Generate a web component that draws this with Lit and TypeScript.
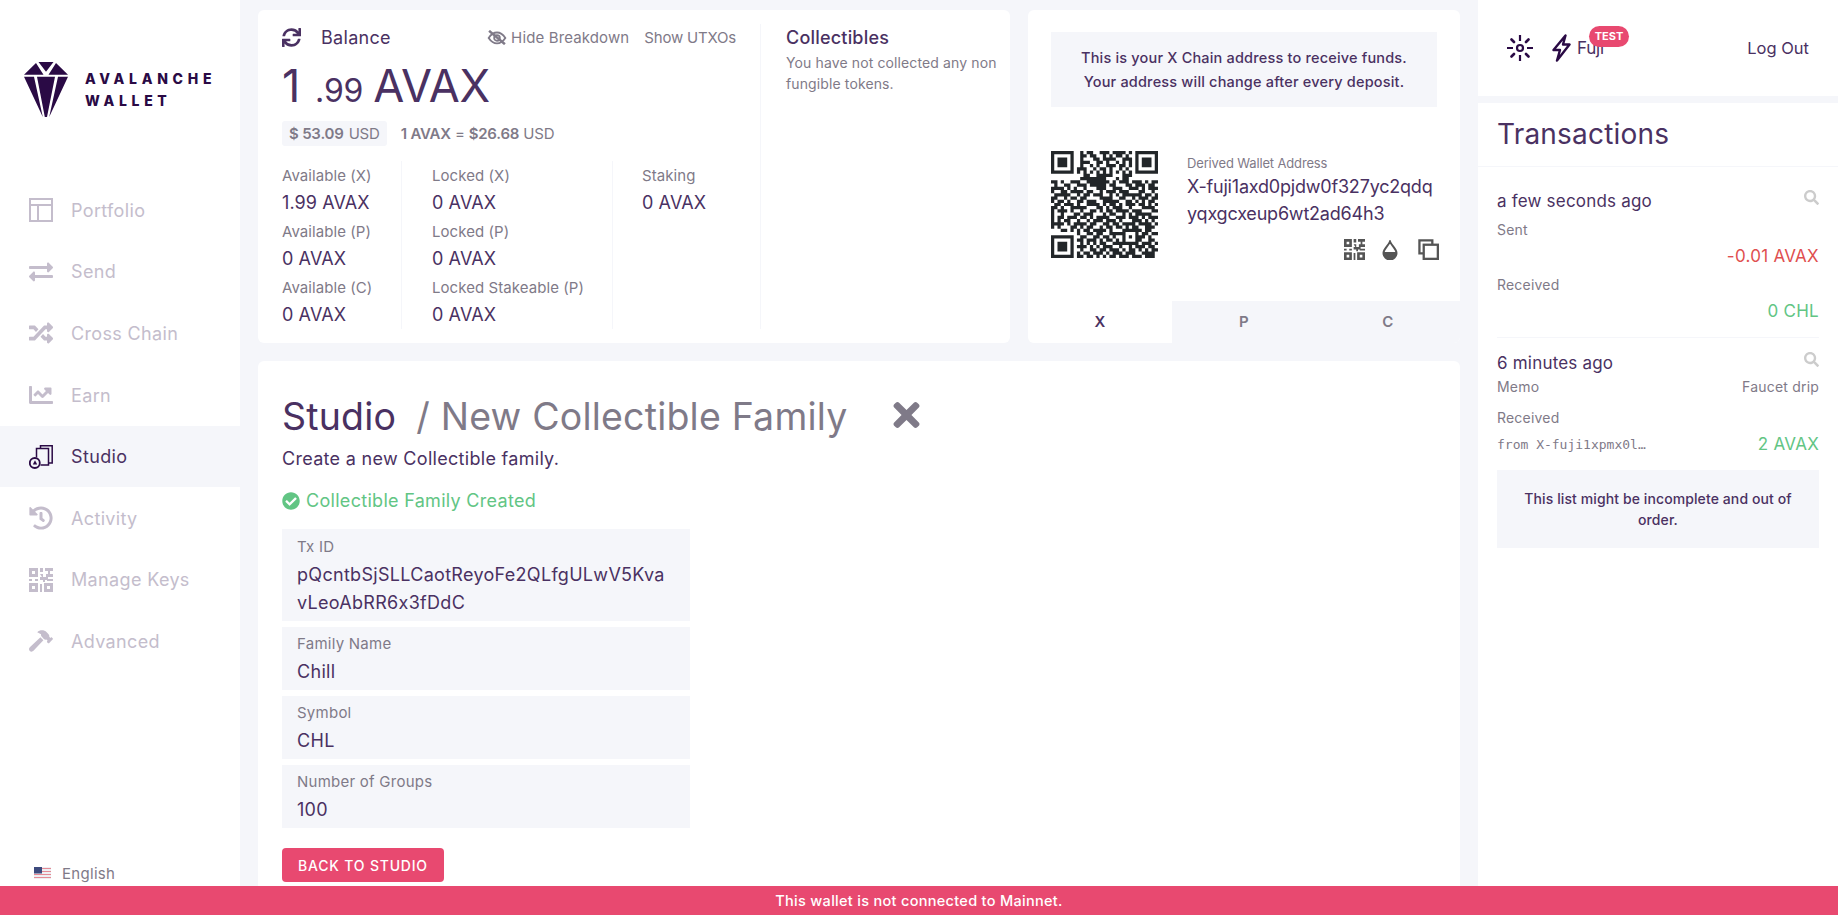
import { LitElement, css, html, svg } from "lit";
import { customElement } from "lit/decorators.js";

// QR modules, read off the screenshot by eye. Finder squares are added in code.
const QR_ROWS = [
  "000000000101100111011110100000000",
  "000000000110110010101101000000000",
  "000000000100011011110011100000000",
  "000000000111001101001010100000000",
  "000000000100101001110110100000000",
  "000000001110010110100101000000000",
  "000000001010101010101010100000000",
  "000000000011001111100011100000000",
  "000000000111111110001011000000000",
  "110100111001111111010111011101011",
  "010011001110111110110001101110110",
  "111101010010001110011100111010111",
  "100110111101100101110111000110010",
  "011111001011011100101011111101101",
  "110010110110000111100110010111011",
  "101101001101110011111001101010110",
  "011011101001111010110101110110101",
  "110100111110001101011100100011110",
  "101110100100110101101111011100011",
  "100100011011100010110010101111100",
  "101101110110101111001110111010111",
  "101011001001011101110100011101010",
  "111101011110110011011011110111101",
  "101000110101100101101101011001110",
  "000110101011011110100011111101100",
  "000000001001101100111110001011011",
  "000000000110011011010010101110100",
  "000000001101110101101010001100110",
  "000000000101010110011111111011101",
  "000000001110101011100100101110110",
  "000000000100110110111010110101011",
  "000000001011011101011101110011110",
  "000000001101101010110111011101110",
];

const QR_FINDERS = [
  [0, 0],
  [26, 0],
  [0, 26],
];

function qrPath(): string {
  let d = "";
  const mod = (x: number, y: number) => {
    d += `M${x} ${y}h1v1h-1z`;
  };
  QR_ROWS.forEach((row, y) => {
    [...row.padEnd(33, "0")].forEach((c, x) => {
      if (c === "1") mod(x, y);
    });
  });
  for (const [fx, fy] of QR_FINDERS) {
    d += `M${fx} ${fy}h7v7h-7zM${fx + 1} ${fy + 1}v5h5v-5zM${fx + 2} ${fy + 2}h3v3h-3z`;
  }
  return d;
}

const ICONS = {
  portfolio: svg`<svg viewBox="0 0 24 24" fill="none" stroke="currentColor" stroke-width="2"><rect x="1" y="1" width="22" height="22"/><path d="M1 7h22M9 7v16"/></svg>`,
  send: svg`<svg viewBox="0 0 512 512" fill="currentColor"><path d="M0 168v-16c0-13.255 10.745-24 24-24h360V80c0-21.367 25.899-32.042 40.971-16.971l80 80c9.372 9.373 9.372 24.569 0 33.941l-80 80C409.956 271.982 384 261.456 384 240v-48H24c-13.255 0-24-10.745-24-24zm488 152H128v-48c0-21.314-25.862-32.08-40.971-16.971l-80 80c-9.372 9.373-9.372 24.569 0 33.941l80 80C102.057 463.997 128 453.437 128 432v-48h360c13.255 0 24-10.745 24-24v-16c0-13.255-10.745-24-24-24z"/></svg>`,
  cross: svg`<svg viewBox="0 0 512 512" fill="currentColor"><path d="M504.971 359.029c9.373 9.373 9.373 24.569 0 33.941l-80 79.984c-15.01 15.01-40.971 4.49-40.971-16.971V416h-58.785a12.004 12.004 0 0 1-8.773-3.812l-70.556-75.596 53.333-57.143L352 336h32v-39.981c0-21.438 25.943-31.998 40.971-16.971l80 79.981zM12 176h84l52.781 56.551 53.333-57.143-70.556-75.596A11.999 11.999 0 0 0 122.785 96H12c-6.627 0-12 5.373-12 12v56c0 6.627 5.373 12 12 12zm372 0v39.984c0 21.46 25.961 31.98 40.971 16.971l80-79.984c9.373-9.373 9.373-24.569 0-33.941l-80-79.981C409.943 24.021 384 34.582 384 56.019V96h-58.785a12.004 12.004 0 0 0-8.773 3.812L96 336H12c-6.627 0-12 5.373-12 12v56c0 6.627 5.373 12 12 12h110.785c3.326 0 6.503-1.381 8.773-3.812L352 176h32z"/></svg>`,
  earn: svg`<svg viewBox="0 0 512 512" fill="currentColor"><path d="M496 384H64V80c0-8.84-7.16-16-16-16H16C7.16 64 0 71.16 0 80v336c0 17.67 14.33 32 32 32h464c8.84 0 16-7.16 16-16v-32c0-8.84-7.16-16-16-16zM464 96H345.94c-21.38 0-32.09 25.85-16.97 40.97l32.4 32.4L288 242.75l-73.37-73.37c-12.5-12.5-32.76-12.5-45.25 0l-68.69 68.69c-6.25 6.25-6.25 16.38 0 22.63l22.62 22.62c6.25 6.25 16.38 6.25 22.63 0L192 237.25l73.37 73.37c12.5 12.5 32.76 12.5 45.25 0l96-96 32.4 32.4c15.12 15.12 40.97 4.41 40.97-16.97V112c.01-8.84-7.15-16-15.99-16z"/></svg>`,
  studio: svg`<svg viewBox="0 0 24 24" fill="none" stroke="currentColor" stroke-width="1.5"><path d="M7.500 12.500V3.500H19.500V20H11.500"/><path d="M11.500 3.500V.8H23.200V18H19.500"/><circle cx="5.800" cy="18" r="5" stroke-width="1.800"/><path d="M6 15.200l-2.200 4.300h4.400z" fill="currentColor" stroke="none"/></svg>`,
  activity: svg`<svg viewBox="0 0 512 512" fill="currentColor"><path d="M504 255.531c.253 136.64-111.18 248.372-247.82 248.468-59.015.042-113.223-20.53-155.822-54.911-11.077-8.94-11.905-25.541-1.839-35.607l11.267-11.267c8.609-8.609 22.353-9.551 31.891-1.984C173.062 425.135 212.781 440 256 440c101.705 0 184-82.311 184-184 0-101.705-82.311-184-184-184-48.814 0-93.149 18.969-126.068 49.932l50.754 50.754c10.08 10.08 2.941 27.314-11.313 27.314H24c-8.837 0-16-7.163-16-16V38.627c0-14.254 17.234-21.393 27.314-11.314l49.372 49.372C129.209 34.136 189.552 8 256 8c136.81 0 247.747 110.78 248 247.531zm-180.912 78.784l9.823-12.63c8.138-10.463 6.253-25.542-4.21-33.679L288 256.349V152c0-13.255-10.745-24-24-24h-16c-13.255 0-24 10.745-24 24v135.651l65.409 50.874c10.463 8.137 25.541 6.253 33.679-4.21z"/></svg>`,
  keys: svg`<svg viewBox="0 0 24 24" fill="currentColor"><path fill-rule="evenodd" d="M0 0h9v9H0zM3 3v3h3V3zM0 15h9v9H0zM3 18v3h3v-3zM15 15h9v9h-9zM18 18v3h3v-3z"/><path d="M11 0h3v4h-3zM11 6h3v3h3V6h2V3h-3V0h8v3h-3v3h3v3h-5v3h-3v2h-2v-2h-3v-3h2zM0 11h3v2H0zM6 11h3v2H6zM18 11h6v2h-6zM11 16h2v8h-2z"/></svg>`,
  hammer: svg`<svg viewBox="0 0 576 512" fill="currentColor"><path d="M571.31 193.94l-22.63-22.63c-6.25-6.25-16.38-6.25-22.63 0l-11.31 11.31-28.9-28.9c5.63-21.31.36-44.9-16.35-61.61l-45.25-45.25c-62.48-62.48-163.79-62.48-226.28 0l90.51 45.25v18.75c0 16.97 6.74 33.25 18.75 45.25l49.14 49.14c16.71 16.71 40.3 21.98 61.61 16.35l28.9 28.9-11.31 11.31c-6.25 6.25-6.25 16.38 0 22.63l22.63 22.63c6.25 6.25 16.38 6.25 22.63 0l90.51-90.51c6.23-6.24 6.23-16.37-.02-22.62zm-286.72-15.2c-3.7-3.7-6.84-7.79-9.85-11.95L19.64 404.96c-25.57 23.88-26.26 64.19-1.53 88.93s65.05 24.05 88.93-1.53l238.13-255.07c-3.96-2.91-7.9-5.87-11.44-9.41l-49.14-49.14z"/></svg>`,
  sync: svg`<svg viewBox="0 0 512 512" fill="currentColor"><path d="M440.65 12.57l4 82.77A247.16 247.16 0 0 0 255.83 8C134.73 8 33.91 94.92 12.29 209.82A12 12 0 0 0 24.09 224h49.05a12 12 0 0 0 11.67-9.26 175.91 175.91 0 0 1 317-56.94l-101.46-4.86a12 12 0 0 0-12.57 12v47.41a12 12 0 0 0 12 12H500a12 12 0 0 0 12-12V12a12 12 0 0 0-12-12h-47.37a12 12 0 0 0-11.98 12.57zM255.83 432a175.61 175.61 0 0 1-146-77.8l101.8 4.87a12 12 0 0 0 12.57-12v-47.4a12 12 0 0 0-12-12H12a12 12 0 0 0-12 12V500a12 12 0 0 0 12 12h47.35a12 12 0 0 0 12-12.6l-4.15-82.57A247.17 247.17 0 0 0 255.83 504c121.11 0 221.93-86.92 243.55-201.82a12 12 0 0 0-11.8-14.18h-49.05a12 12 0 0 0-11.67 9.26A175.86 175.86 0 0 1 255.83 432z"/></svg>`,
  eyeSlash: svg`<svg viewBox="0 0 24 18" fill="none" stroke="currentColor" stroke-width="2.200"><path d="M2 9.500C5 5 8 3 12 3s7 2 10 6.500C19 14 16 16 12 16S5 14 2 9.500z"/><circle cx="12" cy="9.500" r="3.400"/><path d="M2.500 1l19 16" stroke-width="3"/></svg>`,
  close: svg`<svg viewBox="0 80 352 352" fill="currentColor"><path d="M242.72 256l100.07-100.07c12.28-12.28 12.28-32.19 0-44.48l-22.24-22.24c-12.28-12.28-32.19-12.28-44.48 0L176 189.28 75.93 89.21c-12.28-12.28-32.19-12.28-44.48 0L9.21 111.45c-12.28 12.28-12.28 32.19 0 44.48L109.28 256 9.21 356.07c-12.28 12.28-12.28 32.19 0 44.48l22.24 22.24c12.28 12.28 32.2 12.28 44.48 0L176 322.72l100.07 100.07c12.28 12.28 32.2 12.28 44.48 0l22.24-22.24c12.28-12.28 12.28-32.19 0-44.48L242.72 256z"/></svg>`,
  check: svg`<svg viewBox="0 0 512 512" fill="currentColor"><path d="M504 256c0 136.967-111.033 248-248 248S8 392.967 8 256 119.033 8 256 8s248 111.033 248 248zM227.314 387.314l184-184c6.248-6.248 6.248-16.379 0-22.627l-22.627-22.627c-6.248-6.249-16.379-6.249-22.628 0L216 308.118l-70.059-70.059c-6.248-6.248-16.379-6.248-22.628 0l-22.627 22.627c-6.248 6.248-6.248 16.379 0 22.627l104 104c6.249 6.249 16.379 6.249 22.628.001z"/></svg>`,
  search: svg`<svg viewBox="0 0 512 512" fill="currentColor"><path d="M505 442.7L405.3 343c-4.5-4.5-10.6-7-17-7H372c27.6-35.3 44-79.7 44-128C416 93.1 322.9 0 208 0S0 93.1 0 208s93.1 208 208 208c48.3 0 92.7-16.4 128-44v16.3c0 6.4 2.5 12.5 7 17l99.7 99.7c9.4 9.4 24.6 9.4 33.9 0l28.3-28.3c9.4-9.4 9.4-24.6.1-34zM208 336c-70.7 0-128-57.2-128-128 0-70.7 57.2-128 128-128 70.7 0 128 57.2 128 128 0 70.7-57.2 128-128 128z"/></svg>`,
  drop: svg`<svg viewBox="0 0 16 20" fill="none" stroke="currentColor" stroke-width="2"><path d="M8 1.500C6.500 5.500 1.500 9 1.500 13a6.500 6.500 0 0 0 13 0C14.500 9 9.500 5.500 8 1.500z"/><path d="M1.500 12h13v1a6.500 6.500 0 0 1-13 0z" fill="currentColor" stroke="none"/></svg>`,
  copy: svg`<svg viewBox="0 0 22 22" fill="none" stroke="currentColor" stroke-width="2.400"><path d="M6 15H1.500V1.500H15V6"/><rect x="6" y="6" width="14.800" height="14.800"/></svg>`,
  sun: svg`<svg viewBox="0 0 26 26" fill="none" stroke="currentColor" stroke-width="2.200"><circle cx="13" cy="13" r="3"/><path d="M13 0v6M13 20v6M0 13h6M20 13h6" /><path d="M4.500 4.500l2.500 2.500M19 19l2.500 2.500M4.500 21.500L7 19M19 7l2.500-2.500" stroke-linecap="round" stroke-width="2.600"/></svg>`,
  bolt: svg`<svg viewBox="0 0 19 28" fill="none" stroke="currentColor" stroke-width="2.400" stroke-linejoin="round"><path d="M13.500 1.500L1.500 16H8L5 26.500 17.500 10.500H11z"/></svg>`,
  flag: svg`<svg viewBox="0 0 17 12"><rect width="17" height="12" fill="#eeeef2"/><path d="M0 1.500h17M0 4.500h17M0 7.500h17M0 10.500h17" stroke="#e58a95" stroke-width="1.200"/><rect width="8" height="6.500" fill="#3d4a7d"/></svg>`,
  logo: svg`<svg viewBox="0 0 44 56" fill="currentColor"><path d="M12 1L0 12.800h19.500zM14.500 0h15L22 9.800zM32 1l12 11.800H24.500zM0 14.800h10L18.800 55zM13 14.800h18L23 55h-2.200zM34 14.800h10L25.200 55z"/></svg>`,
};

const NAV = [
  ["Portfolio", ICONS.portfolio],
  ["Send", ICONS.send],
  ["Cross Chain", ICONS.cross],
  ["Earn", ICONS.earn],
  ["Studio", ICONS.studio],
  ["Activity", ICONS.activity],
  ["Manage Keys", ICONS.keys],
  ["Advanced", ICONS.hammer],
] as const;

const BALANCES = [
  [
    ["Available (X)", "1.99 AVAX"],
    ["Available (P)", "0 AVAX"],
    ["Available (C)", "0 AVAX"],
  ],
  [
    ["Locked (X)", "0 AVAX"],
    ["Locked (P)", "0 AVAX"],
    ["Locked Stakeable (P)", "0 AVAX"],
  ],
  [["Staking", "0 AVAX"]],
];

@customElement("app-root")
export class AppRoot extends LitElement {
  static override styles = css`
    :host {
      display: block;
      position: relative;
      width: 100%;
      height: 100vh;
      overflow: hidden;
      background: #f5f6fa;
      color: #4a3162;
      font-family: Inter, "Noto Sans", sans-serif;
      font-size: 18px;
      letter-spacing: 0.3px;
    }
    * {
      box-sizing: border-box;
    }
    svg {
      display: block;
      flex: none;
    }
    .app {
      display: grid;
      grid-template-columns: 240px 1fr 360px;
      height: 100%;
    }

    /* sidebar */
    .side {
      display: flex;
      flex-direction: column;
      background: #fff;
      padding: 62px 0 30px;
    }
    .brand {
      display: flex;
      gap: 17px;
      height: 56px;
      padding-left: 24px;
      color: #2a0a45;
    }
    .brand svg {
      width: 44px;
      height: 56px;
    }
    .brand-name {
      margin-top: 6px;
      font-size: 14px;
      font-weight: 800;
      line-height: 22px;
      letter-spacing: 4.7px;
    }
    .nav {
      margin-top: 61.5px;
    }
    .nav-item {
      display: flex;
      align-items: center;
      gap: 18px;
      height: 61.6px;
      padding-left: 29px;
      color: #c4bdcc;
      letter-spacing: 0.35px;
    }
    .nav-item svg {
      width: 24px;
      height: 24px;
    }
    .nav-item.active {
      background: #f5f6fa;
      color: #4a3162;
    }
    .nav-item.active svg {
      color: #2a0a45;
    }
    .lang {
      display: flex;
      align-items: center;
      gap: 11px;
      margin-top: auto;
      padding-left: 34px;
      height: 24px;
      font-size: 15px;
      color: #7f7a88;
    }
    .lang svg {
      width: 17px;
      height: 12px;
    }

    /* middle */
    .main {
      display: flex;
      flex-direction: column;
      gap: 18px;
      padding: 10px 18px 0;
      min-width: 0;
    }
    .top {
      display: flex;
      gap: 18px;
      height: 333px;
    }
    .card {
      background: #fff;
      border-radius: 6px;
    }
    .balance {
      display: flex;
      width: 752px;
      padding: 14px 0;
    }
    .bal {
      width: 503px;
      padding-left: 24px;
      border-right: 1px solid #f5f6fa;
    }
    .bal-head {
      display: flex;
      align-items: center;
      height: 26px;
    }
    .bal-head .sync {
      width: 19px;
      height: 19px;
      margin-right: 20px;
    }
    .hide {
      display: flex;
      align-items: center;
      gap: 4px;
      margin-left: auto;
      color: #7f7a88;
      font-size: 15px;
      letter-spacing: 0.13px;
    }
    .hide svg {
      width: 20px;
      height: 15px;
    }
    .utxo {
      margin: 0 24px 0 15px;
      color: #7f7a88;
      font-size: 15px;
      letter-spacing: -0.2px;
    }
    .big {
      margin-top: 12px;
      height: 48px;
      line-height: 48px;
      font-size: 45px;
      letter-spacing: -0.2px;
    }
    .big small {
      font-size: 32px;
      margin: 0 10px 0 15px;
    }
    .usd {
      display: flex;
      align-items: center;
      margin-top: 11px;
      height: 25px;
      font-size: 15px;
      color: #7f7a88;
      letter-spacing: -0.2px;
    }
    .pill {
      display: flex;
      align-items: center;
      gap: 5px;
      height: 25px;
      padding: 0 7px;
      margin-right: 14px;
      border-radius: 3px;
      background: #f5f6fa;
    }
    .usd b {
      font-weight: 600;
    }
    .usd .rate {
      white-space: pre;
    }
    .breakdown {
      display: flex;
      margin-top: 15px;
      height: 168px;
    }
    .col {
      padding: 3px 0 0 30px;
      border-left: 1px solid #f5f6fa;
    }
    .col:nth-child(1) {
      width: 119px;
      padding-left: 0;
      border-left: 0;
    }
    .col:nth-child(2) {
      width: 211px;
    }
    .col:nth-child(3) {
      flex: 1;
      padding-left: 29px;
    }
    .stat {
      margin-bottom: 4px;
    }
    .stat .value {
      line-height: 30px;
      letter-spacing: 0.1px;
    }
    .label {
      height: 24px;
      line-height: 24px;
      font-size: 15px;
      color: #7f7a88;
      white-space: nowrap;
      letter-spacing: 0.07px;
    }
    .value {
      height: 28px;
      line-height: 28px;
    }
    .coll {
      flex: 1;
      padding-left: 25px;
    }
    .coll h4 {
      margin: 0;
      padding-top: 1px;
      font-size: 18px;
      font-weight: 500;
      line-height: 26px;
      letter-spacing: 0.2px;
    }
    .coll p {
      margin: 1px 0 0;
      font-size: 14px;
      line-height: 21px;
      color: #7f7a88;
      letter-spacing: 0.12px;
    }

    .address {
      display: flex;
      flex-direction: column;
      flex: 1;
      overflow: hidden;
    }
    .notice {
      display: flex;
      align-items: center;
      justify-content: center;
      margin: 22px 23px 0;
      height: 75px;
      background: #f5f6fa;
      font-size: 14.5px;
      font-weight: 500;
      line-height: 24px;
      text-align: center;
      letter-spacing: 0.18px;
    }
    .addr-body {
      display: flex;
      gap: 29px;
      margin: 44px 21px 0 23px;
    }
    .qr {
      width: 107px;
      height: 107px;
      color: #222629;
    }
    .addr-text {
      flex: 1;
      padding-top: 3px;
    }
    .addr-text .cap {
      height: 18px;
      line-height: 18px;
      font-size: 13px;
      color: #7f7a88;
      letter-spacing: -0.15px;
    }
    .addr-text .line {
      margin-top: 1px;
      font-size: 18px;
      line-height: 27px;
      word-break: break-all;
      letter-spacing: -0.2px;
    }
    .addr-icons {
      display: flex;
      justify-content: flex-end;
      align-items: center;
      gap: 17px;
      margin-top: 12px;
      color: #555;
    }
    .addr-icons svg {
      width: 21px;
      height: 21px;
    }
    .addr-icons .drop {
      width: 16px;
      margin-right: 3px;
    }
    .addr-icons .drop svg {
      width: 16px;
      height: 20px;
    }
    .tabs {
      display: grid;
      grid-template-columns: repeat(3, 1fr);
      margin-top: auto;
      height: 42px;
      background: #f5f6fa;
      font-size: 15px;
      font-weight: 600;
      color: #7f7a88;
      text-align: center;
      line-height: 42px;
    }
    .tabs .on {
      background: #fff;
      color: #4a3162;
    }

    .studio {
      flex: 1;
      padding: 33px 24px 0;
      border-radius: 6px 6px 0 0;
    }
    .title {
      display: flex;
      align-items: center;
      height: 44px;
      font-size: 37.5px;
      font-weight: 400;
      margin: 0;
      letter-spacing: 0.2px;
    }
    .title .sub {
      margin-left: 20px;
      color: #7f7a88;
    }
    .title svg {
      width: 27px;
      height: 26px;
      margin: -2px 0 0 46px;
      color: #7f7a88;
    }
    .desc {
      margin-top: 8px;
      line-height: 26px;
    }
    .done {
      display: flex;
      align-items: center;
      gap: 6px;
      margin-top: 16px;
      line-height: 26px;
      color: #62c584;
    }
    .done svg {
      width: 18px;
      height: 18px;
    }
    .fields {
      display: flex;
      flex-direction: column;
      gap: 6px;
      margin-top: 15px;
      width: 408px;
    }
    .field {
      padding: 5px 15px 4px;
      background: #f5f6fa;
    }
    .field.tall {
      padding-top: 6px;
    }
    .field .label {
      margin-bottom: 2px;
      letter-spacing: 0.25px;
    }
    .btn {
      display: flex;
      align-items: center;
      justify-content: center;
      margin-top: 20px;
      width: 162px;
      height: 34px;
      border: 0;
      border-radius: 4px;
      background: #e84970;
      color: #fff;
      font: 500 14px Inter, sans-serif;
      letter-spacing: 0.8px;
    }

    /* right column */
    .right {
      display: flex;
      flex-direction: column;
      gap: 7px;
    }
    .acct {
      display: flex;
      align-items: center;
      height: 96px;
      padding: 0 29px;
      background: #fff;
      color: #2a0a45;
    }
    .acct .sun {
      width: 26px;
      height: 26px;
      margin-right: 19px;
    }
    .acct .bolt {
      width: 19px;
      height: 28px;
      margin-right: 6px;
    }
    .net {
      position: relative;
      font-size: 17px;
      color: #4a3162;
      letter-spacing: -0.2px;
    }
    .badge {
      position: absolute;
      top: -12px;
      left: 12px;
      width: 40px;
      height: 21px;
      border-radius: 11px;
      background: #e84970;
      color: #fff;
      font-size: 11px;
      font-weight: 700;
      line-height: 21px;
      text-align: center;
      letter-spacing: 0;
    }
    .logout {
      margin-left: auto;
      font-size: 16.5px;
      color: #4a3162;
      letter-spacing: 0;
    }
    .txs {
      flex: 1;
      background: #fff;
    }
    .txs h2 {
      margin: 0;
      padding: 14px 19px 15px;
      height: 64px;
      font-size: 28px;
      font-weight: 400;
      line-height: 34px;
      border-bottom: 1px solid #f5f6fa;
      letter-spacing: 0.2px;
    }
    .tx-list {
      padding: 0 19px;
    }
    .tx {
      border-bottom: 1px solid #f5f6fa;
      padding: 21px 0 14px;
    }
    .tx.last {
      border-bottom: 0;
      padding: 12px 0 0;
    }
    .row {
      display: flex;
      align-items: center;
      justify-content: space-between;
    }
    .when {
      height: 26px;
      line-height: 26px;
      font-size: 17px;
      letter-spacing: 0.2px;
    }
    .when svg {
      width: 15px;
      height: 15px;
      color: #ccc;
      margin-top: -7px;
    }
    .meta {
      height: 20px;
      line-height: 20px;
      font-size: 14px;
      color: #7f7a88;
      letter-spacing: 0.2px;
    }
    .amt {
      height: 24px;
      line-height: 24px;
      font-size: 17px;
      text-align: right;
      margin-left: auto;
      letter-spacing: 0.27px;
    }
    .red {
      color: #e04f4f;
    }
    .green {
      color: #62c584;
    }
    .from {
      font-family: "DejaVu Sans Mono", "Liberation Mono", monospace;
      font-size: 13px;
      color: #7f7a88;
      letter-spacing: 0;
    }
    .warn {
      margin: 14px 0 0;
      padding: 18px 22px;
      height: 78px;
      background: #f5f6fa;
      font-size: 14px;
      font-weight: 500;
      line-height: 21px;
      text-align: center;
      letter-spacing: 0.1px;
    }

    .net-bar {
      position: absolute;
      left: 0;
      right: 0;
      bottom: 0;
      height: 29px;
      background: #e84970;
      color: #fff;
      font-size: 14.5px;
      font-weight: 500;
      line-height: 29px;
      text-align: center;
    }
  `;

  private renderField(label: string, lines: string[]) {
    return html`<div class="field ${lines.length > 1 ? "tall" : ""}">
      <div class="label">${label}</div>
      ${lines.map((l) => html`<div class="value">${l}</div>`)}
    </div>`;
  }

  override render() {
    return html`
      <div class="app">
        <aside class="side">
          <div class="brand">
            ${ICONS.logo}
            <div class="brand-name">AVALANCHE<br />WALLET</div>
          </div>
          <nav class="nav">
            ${NAV.map(
              ([name, icon]) =>
                html`<div class="nav-item ${name === "Studio" ? "active" : ""}">${icon}<span>${name}</span></div>`,
            )}
          </nav>
          <div class="lang">${ICONS.flag}<span>English</span></div>
        </aside>

        <main class="main">
          <div class="top">
            <section class="card balance">
              <div class="bal">
                <div class="bal-head">
                  <span class="sync">${ICONS.sync}</span>
                  <span>Balance</span>
                  <span class="hide">${ICONS.eyeSlash}Hide Breakdown</span>
                  <span class="utxo">Show UTXOs</span>
                </div>
                <div class="big">1<small>.99</small>AVAX</div>
                <div class="usd">
                  <span class="pill"><b>$ 53.09</b> USD</span>
                  <span class="rate"><b>1 AVAX</b> = <b>$26.68</b> USD</span>
                </div>
                <div class="breakdown">
                  ${BALANCES.map(
                    (col) => html`<div class="col">
                      ${col.map(
                        ([label, value]) =>
                          html`<div class="stat"><div class="label">${label}</div><div class="value">${value}</div></div>`,
                      )}
                    </div>`,
                  )}
                </div>
              </div>
              <div class="coll">
                <h4>Collectibles</h4>
                <p>You have not collected any non fungible tokens.</p>
              </div>
            </section>

            <section class="card address">
              <div class="notice">
                <div>This is your X Chain address to receive funds.<br />Your address will change after every deposit.</div>
              </div>
              <div class="addr-body">
                <svg class="qr" viewBox="0 0 33 33" fill="currentColor" fill-rule="evenodd">
                  <path d=${qrPath()}></path>
                </svg>
                <div class="addr-text">
                  <div class="cap">Derived Wallet Address</div>
                  <div class="line">X-fuji1axd0pjdw0f327yc2qdq yqxgcxeup6wt2ad64h3</div>
                  <div class="addr-icons">
                    ${ICONS.keys}<span class="drop">${ICONS.drop}</span>${ICONS.copy}
                  </div>
                </div>
              </div>
              <div class="tabs">
                <div class="on">X</div>
                <div>P</div>
                <div>C</div>
              </div>
            </section>
          </div>

          <section class="card studio">
            <h1 class="title">
              <span>Studio</span><span class="sub">/ New Collectible Family</span>${ICONS.close}
            </h1>
            <div class="desc">Create a new Collectible family.</div>
            <div class="done">${ICONS.check}<span>Collectible Family Created</span></div>
            <div class="fields">
              ${this.renderField("Tx ID", ["pQcntbSjSLLCaotReyoFe2QLfgULwV5Kva", "vLeoAbRR6x3fDdC"])}
              ${this.renderField("Family Name", ["Chill"])}
              ${this.renderField("Symbol", ["CHL"])}
              ${this.renderField("Number of Groups", ["100"])}
            </div>
            <button class="btn">BACK TO STUDIO</button>
          </section>
        </main>

        <aside class="right">
          <div class="acct">
            <span class="sun">${ICONS.sun}</span>
            <span class="bolt">${ICONS.bolt}</span>
            <span class="net">Fuji<span class="badge">TEST</span></span>
            <span class="logout">Log Out</span>
          </div>
          <div class="txs">
            <h2>Transactions</h2>
            <div class="tx-list">
              <div class="tx">
                <div class="row when">a few seconds ago ${ICONS.search}</div>
                <div class="meta" style="margin-top:6px">Sent</div>
                <div class="amt red" style="margin-top:4px">-0.01 AVAX</div>
                <div class="meta" style="margin-top:7px">Received</div>
                <div class="amt green" style="margin-top:4px">0 CHL</div>
              </div>
              <div class="tx last">
                <div class="row when">6 minutes ago ${ICONS.search}</div>
                <div class="row meta" style="margin-top:1px"><span>Memo</span><span>Faucet drip</span></div>
                <div class="meta" style="margin-top:11px">Received</div>
                <div class="row" style="margin-top:4px">
                  <span class="from">from X-fuji1xpmx0l…</span>
                  <span class="amt green">2 AVAX</span>
                </div>
              </div>
              <div class="warn">This list might be incomplete and out of order.</div>
            </div>
          </div>
        </aside>
      </div>
      <div class="net-bar">This wallet is not connected to Mainnet.</div>
    `;
  }
}
